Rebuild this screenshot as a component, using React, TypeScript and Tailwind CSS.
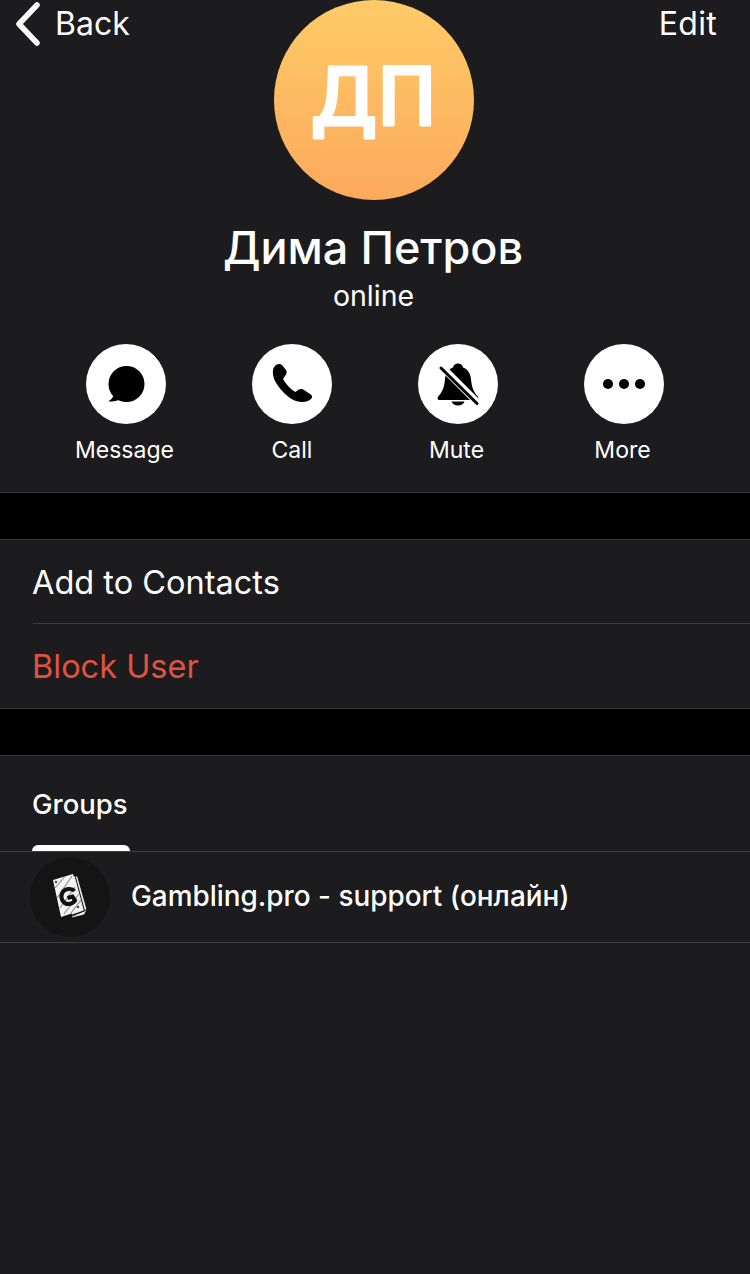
const font = "font-['Inter','Noto_Sans',sans-serif]";

function Glyph({ children }: { children: React.ReactNode }) {
  return (
    <svg width="80" height="80" viewBox="-10 -10 80 80" fill="#000">
      {children}
    </svg>
  );
}

function MessageIcon() {
  return (
    <Glyph>
      <circle cx="30.500" cy="30" r="18" />
      <path d="M18 40 C17.500 43 15.500 45.500 12.500 47.200 C17 47.800 21.500 47 25 45 Z" />
    </Glyph>
  );
}

function PhoneIcon() {
  return (
    <Glyph>
      <path d="M14 11 C10 14 10 20 13 27 C18 36 26 44 34 47 C40 49 46 48 49 45 C51 43 50 41 48 40 L42 36 C40 34.500 38 35 36 36 L33.500 38 C28 35 24 30 21 25 L23 22 C25 20 25 18 24 16 L20 11 C18 9.500 16 9.500 14 11 Z" />
    </Glyph>
  );
}

function BellOffIcon() {
  return (
    <Glyph>
      <path d="M30 9.500 C32.500 9.500 34.500 11 35 13.500 C40 15.500 42.500 19.500 43 25 C43.500 32 45.500 38 49.500 42 C51 44 50.500 46 48.500 46 H11.500 C9.500 46 9 44 10.500 42 C14.500 38 16.500 32 17 25 C17.500 19.500 20 15.500 25 13.500 C25.500 11 27.500 9.500 30 9.500 Z" />
      <path d="M23.500 47.500 H36.500 C35.500 50 33 51.500 30 51.500 S24.500 50 23.500 47.500 Z" />
      <path d="M9 8 L54 53" stroke="#fff" strokeWidth="7" />
      <path d="M13 14 L49 49.500" stroke="#000" strokeWidth="3" strokeLinecap="round" />
    </Glyph>
  );
}

function CardsLogo() {
  return (
    <Glyph>
      <path d="M30 9 L37.500 9.500 L47 42 L44 47.500 L32 50.500 Z" fill="#e8e8e8" />
      <g stroke="#141414" strokeWidth="1" fill="none">
        <path d="M35 8.500 L44.500 44 L24 50.500" />
        <path d="M37.500 8.500 L47 42.500 L28 51" />
      </g>
      <path d="M13 13 L33 7 L42 43 L21 50 Z" fill="#f4f4f4" />
      <g stroke="#8c8c8c" strokeWidth="1.100">
        <path d="M15 21 L25 9.500" />
        <path d="M17 31 L32 9" />
        <path d="M20 41 L35 20" />
        <path d="M24 47 L39 27" />
        <path d="M31 46 L41 33" />
      </g>
      <path d="M34.500 24 C31.500 20.500 24 21.500 22 26.500 C20 31.500 23.500 37.500 29 37 C31.500 36.800 33.500 35.500 35 33.500 L32.500 29.500 L27.500 31" fill="none" stroke="#111" strokeWidth="4" />
      <circle cx="16" cy="15" r="1.200" fill="#444" />
      <circle cx="38" cy="40" r="1.200" fill="#444" />
    </Glyph>
  );
}

function ActionButton({ label, shift, children }: { label: string; shift?: boolean; children: React.ReactNode }) {
  return (
    <div className="flex w-[166px] flex-col items-center">
      <div className="flex h-20 w-20 items-center justify-center rounded-full bg-white">{children}</div>
      <span className={shift ? "mt-[11px] pr-[3px] text-[23px] leading-[30px] text-white" : "mt-[11px] text-[23px] leading-[30px] text-white"}>{label}</span>
    </div>
  );
}

export default function App() {
  return (
    <div className={`flex h-[1274px] w-[750px] flex-col overflow-hidden bg-[#1c1c1e] text-white ${font}`}>
      <div className="flex h-[493px] flex-col border-b border-[#3d3d40]">
        <div className="grid grid-cols-[274px_200px_276px]">
          <div className="flex items-start pl-[15px] pt-[2px]">
            <svg width="26" height="44" viewBox="0 0 26 44" fill="none">
              <path d="M22 3 L4 22 L22 41" stroke="#fff" strokeWidth="5.500" strokeLinecap="round" strokeLinejoin="round" />
            </svg>
            <span className="ml-[14px] text-[32px] leading-[44px]">Back</span>
          </div>
          <div className="flex h-[200px] w-[200px] items-center justify-center rounded-full bg-gradient-to-b from-[#fecb68] to-[#fca95c]">
            <svg width="200" height="200" viewBox="0 0 200 200">
              <text x="102.500" y="125" textAnchor="middle" fontFamily="'Noto Sans', sans-serif" fontSize="82" fontWeight="500" fill="#fff" stroke="#fff" strokeWidth="3" strokeLinejoin="round" letterSpacing="2">ДП</text>
            </svg>
          </div>
          <div className="pr-[33px] pt-[2px] text-right text-[32px] leading-[44px] tracking-[0.3px]">Edit</div>
        </div>
        <div className="mt-[18px] pr-[4px] text-center text-[45px] font-medium leading-[60px]">Дима Петров</div>
        <div className="mt-[2px] pr-[3px] text-center text-[28.500px] leading-[32px]">online</div>
        <div className="mt-[32px] flex pl-[43px]">
          <ActionButton label="Message" shift><MessageIcon /></ActionButton>
          <ActionButton label="Call"><PhoneIcon /></ActionButton>
          <ActionButton label="Mute" shift><BellOffIcon /></ActionButton>
          <ActionButton label="More" shift>
            <div className="flex gap-[6px]">
              <span className="h-[10px] w-[10px] rounded-full bg-black" />
              <span className="h-[10px] w-[10px] rounded-full bg-black" />
              <span className="h-[10px] w-[10px] rounded-full bg-black" />
            </div>
          </ActionButton>
        </div>
      </div>

      <div className="h-[46px] bg-black" />

      <div className="border-y border-[#3d3d40]">
        <div className="flex h-[83px] items-center pl-[32px] pt-[4px] text-[32.500px]">Add to Contacts</div>
        <div className="ml-[33px] h-px bg-[#3d3d40]" />
        <div className="flex h-[84px] items-center pl-[32px] pt-[2px] text-[32.500px] text-[#e0533f]">Block User</div>
      </div>

      <div className="h-[46px] bg-black" />

      <div className="border-t border-[#3d3d40]">
        <div className="flex h-[95px] flex-col justify-between pl-[32px]">
          <span className="pt-[32px] text-[27.500px] font-medium leading-[32px]">Groups</span>
          <div className="h-[6px] w-[98px] rounded-t-[8px] bg-white" />
        </div>
        <div className="flex h-[92px] items-center border-y border-[#3d3d40] pl-[30px]">
          <div className="flex h-20 w-20 items-center justify-center rounded-full bg-[#141414]">
            <CardsLogo />
          </div>
          <span className="ml-[21px] text-[27.900px] font-medium">Gambling.pro - support (онлайн)</span>
        </div>
      </div>
    </div>
  );
}
